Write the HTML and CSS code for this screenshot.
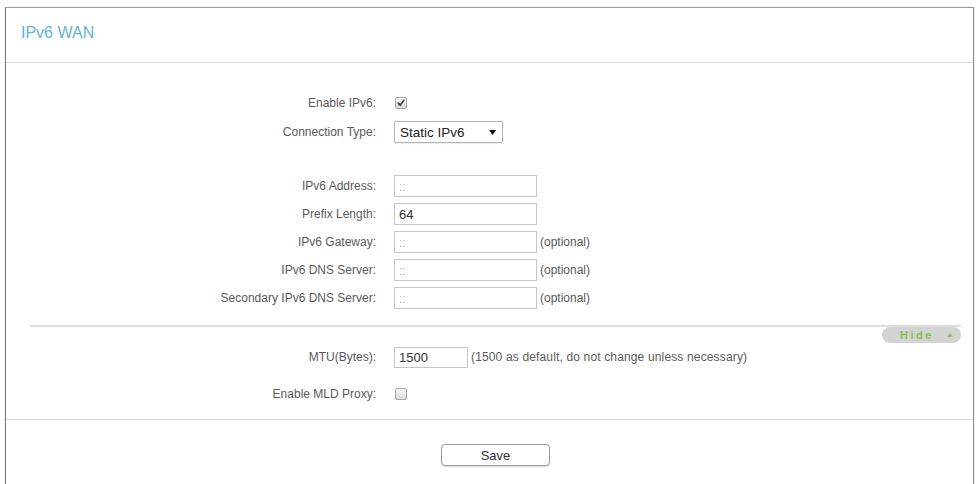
FILE: index.html
```html
<!DOCTYPE html>
<html lang="en">
<head>
<meta charset="utf-8">
<title>IPv6 WAN</title>
<link rel="stylesheet" href="styles.css">
</head>
<body>
<div class="panel">
  <div class="panel-head">
    <h2 class="panel-title">IPv6 WAN</h2>
  </div>
  <div class="panel-body">
    <div class="row r-enable">
      <span class="label">Enable IPv6:</span>
      <span class="field">
        <span class="check" role="checkbox" aria-checked="true">
          <svg viewBox="0 0 12 12" width="12" height="12"><path d="M2.6 6.2 L5 8.6 L9.4 2.8" fill="none" stroke="#3a3a3a" stroke-width="2" stroke-linecap="round" stroke-linejoin="round"/></svg>
        </span>
      </span>
    </div>
    <div class="row r-conn">
      <span class="label">Connection Type:</span>
      <span class="field">
        <span class="select">
          <span class="select-text">Static IPv6</span>
          <svg class="select-arrow" viewBox="0 0 7 5" width="7" height="5"><path d="M0 0 H7 L3.5 5 Z" fill="#111"/></svg>
        </span>
      </span>
    </div>
    <div class="row r-addr">
      <span class="label">IPv6 Address:</span>
      <span class="field"><input class="text" type="text" placeholder="::"></span>
    </div>
    <div class="row">
      <span class="label">Prefix Length:</span>
      <span class="field"><input class="text" type="text" value="64"></span>
    </div>
    <div class="row">
      <span class="label">IPv6 Gateway:</span>
      <span class="field"><input class="text" type="text" placeholder="::"><span class="note">(optional)</span></span>
    </div>
    <div class="row">
      <span class="label">IPv6 DNS Server:</span>
      <span class="field"><input class="text" type="text" placeholder="::"><span class="note">(optional)</span></span>
    </div>
    <div class="row">
      <span class="label">Secondary IPv6 DNS Server:</span>
      <span class="field"><input class="text" type="text" placeholder="::"><span class="note">(optional)</span></span>
    </div>
    <div class="adv-bar">
      <div class="adv-rule"></div>
      <button class="adv-toggle" type="button"><span class="adv-text">Hide</span><svg class="adv-arrow" viewBox="0 0 6 4" width="6" height="4"><path d="M0 4 L3 0 L6 4 Z" fill="#8cc05a"/></svg></button>
    </div>
    <div class="row r-mtu">
      <span class="label">MTU(Bytes):</span>
      <span class="field"><input class="text text-mtu" type="text" value="1500"><span class="note note-wide">(1500 as default, do not change unless necessary)</span></span>
    </div>
    <div class="row r-mld">
      <span class="label">Enable MLD Proxy:</span>
      <span class="field"><span class="check" role="checkbox" aria-checked="false"></span></span>
    </div>
  </div>
  <div class="panel-foot">
    <button class="btn-save" type="button">Save</button>
  </div>
</div>
</body>
</html>
```

FILE: styles.css
```css
html, body {
  margin: 0;
  padding: 0;
  background: #ffffff;
}

body {
  font-family: "Liberation Sans", Arial, sans-serif;
  font-size: 12px;
  color: #5a5a5a;
}

.panel {
  margin: 7px 5px 0 5px;
  border: 1px solid #9a9a9a;
  border-left-color: #7a7a7a;
  border-right-color: #8a8a8a;
  box-shadow: 0 0 1px rgba(0, 0, 0, 0.25);
  background: #fff;
  padding-bottom: 30px;
}

.panel-head {
  padding: 16px 15px 20px 15px;
  border-bottom: 1px solid #dcdcdc;
}

.panel-title {
  margin: 0;
  font-weight: normal;
  font-size: 16px;
  line-height: 18px;
  color: #62b5d3;
}

.panel-body {
  padding: 29px 0 14px 0;
}

.row {
  display: grid;
  grid-template-columns: 370px 1fr;
  column-gap: 18px;
  align-items: center;
  height: 22px;
  margin-top: 6px;
}

.row.r-enable { margin-top: 0; }
.row.r-conn { margin-top: 7px; }
.row.r-addr { margin-top: 32px; }
.row.r-mtu { margin-top: 3px; }
.row.r-mld { margin-top: 15px; }

.label {
  text-align: right;
  color: #5a5a5a;
  white-space: nowrap;
}

.field {
  display: flex;
  align-items: center;
  gap: 3px;
}

.note {
  color: #5a5a5a;
  white-space: nowrap;
}

.note-wide {
  letter-spacing: 0.15px;
}

.check {
  box-sizing: border-box;
  width: 12px;
  height: 12px;
  margin-left: 1px;
  border: 1px solid #a8a8a8;
  border-radius: 2px;
  background: linear-gradient(#f6f6f6, #dadada);
  display: flex;
  align-items: center;
  justify-content: center;
}

.check svg {
  display: block;
  width: 10px;
  height: 10px;
}

.select {
  box-sizing: border-box;
  width: 109px;
  height: 22px;
  border: 1px solid #b4b4b4;
  border-radius: 1px;
  box-shadow: 0 1px 1px rgba(0, 0, 0, 0.08);
  background: #fff;
  display: flex;
  align-items: center;
  justify-content: space-between;
  padding: 0 6px 0 5px;
}

.select-text {
  font-size: 13.5px;
  color: #222;
}

.select-arrow {
  display: block;
}

.text {
  box-sizing: border-box;
  width: 143px;
  height: 22px;
  margin: 0;
  border: 1px solid #c6c6c6;
  border-radius: 0;
  padding: 0 4px;
  font-family: "Liberation Sans", Arial, sans-serif;
  font-size: 13px;
  color: #333;
  background: #fff;
  outline: none;
}

.text::placeholder {
  color: #b0b0b0;
  font-size: 12px;
}

.text-mtu {
  width: 74px;
  height: 21px;
}

.adv-bar {
  margin-top: 16px;
  display: flex;
  flex-direction: column;
}

.adv-rule {
  height: 2px;
  background: #dddddd;
  margin: 0 12px 0 24px;
}

.adv-toggle {
  align-self: flex-end;
  margin: 0 12px 0 0;
  box-sizing: border-box;
  width: 79px;
  height: 16px;
  border: 0;
  border-radius: 8px;
  background: #d3d3d3;
  padding: 0 8px 0 18px;
  display: flex;
  align-items: center;
  justify-content: space-between;
  font-family: "Liberation Sans", Arial, sans-serif;
  cursor: pointer;
}

.adv-text {
  font-size: 11px;
  font-weight: bold;
  letter-spacing: 2.5px;
  color: #84c24c;
  line-height: 16px;
}

.adv-arrow {
  display: block;
}

.panel-foot {
  border-top: 1px solid #dddddd;
  padding: 24px 0 0 12px;
  display: flex;
  justify-content: center;
}

.btn-save {
  box-sizing: border-box;
  width: 109px;
  height: 22px;
  border: 1px solid #9c9c9c;
  border-radius: 4px;
  background: #fff;
  box-shadow: 0 1px 1px rgba(0, 0, 0, 0.15);
  font-family: "Liberation Sans", Arial, sans-serif;
  font-size: 13px;
  color: #333;
  padding: 0;
  cursor: pointer;
}
```
